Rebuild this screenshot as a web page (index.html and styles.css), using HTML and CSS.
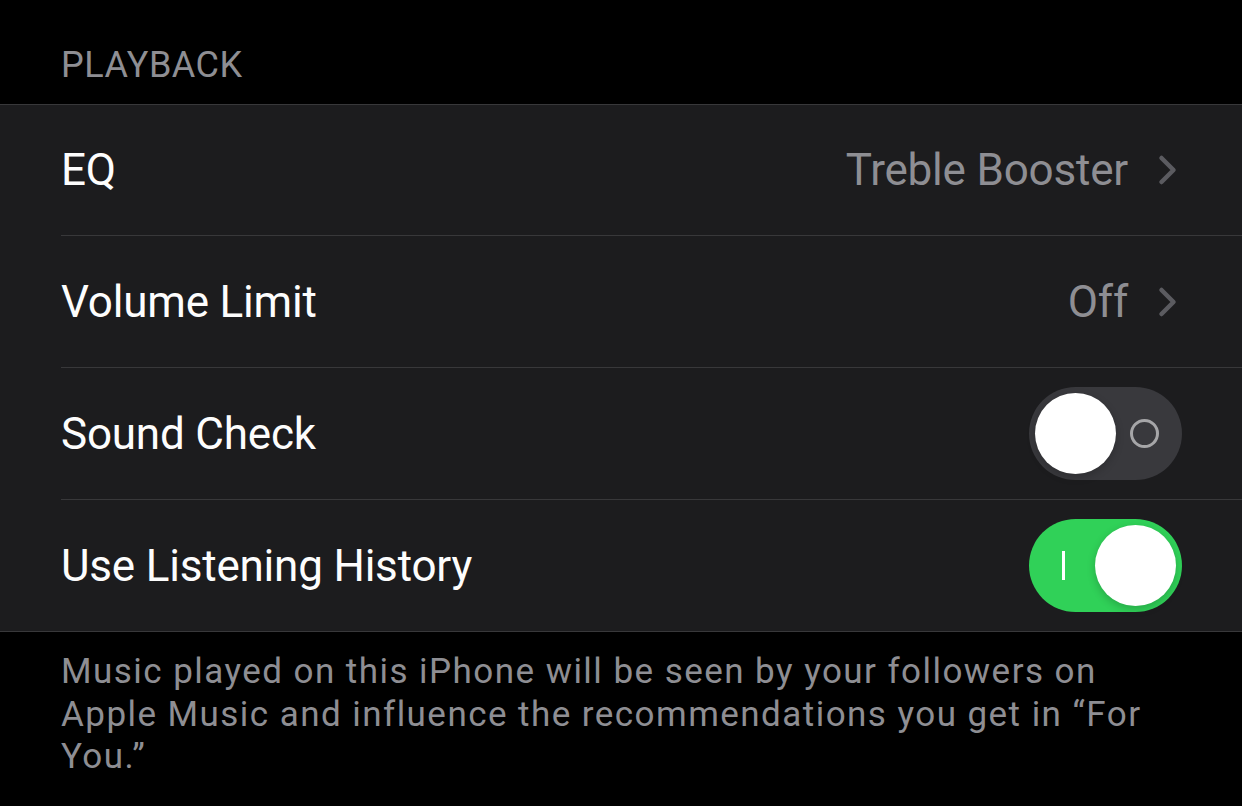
FILE: index.html
```html
<!DOCTYPE html>
<html lang="en">
<head>
<meta charset="UTF-8" />
<meta name="viewport" content="width=device-width, initial-scale=1" />
<title>Playback</title>
<link rel="stylesheet" href="styles.css">
</head>
<body>
  <div class="section-header">PLAYBACK</div>
  <div class="group">
    <div class="row">
      <span class="row-label">EQ</span>
      <span class="row-value">Treble Booster</span>
      <svg class="chevron" width="20" height="32" viewBox="0 0 20 32"><path d="M3.5 4 L15.5 16 L3.5 28" fill="none" stroke="#5b5b60" stroke-width="4.5" stroke-linecap="round" stroke-linejoin="round"/></svg>
    </div>
    <div class="row">
      <span class="row-label">Volume Limit</span>
      <span class="row-value">Off</span>
      <svg class="chevron" width="20" height="32" viewBox="0 0 20 32"><path d="M3.5 4 L15.5 16 L3.5 28" fill="none" stroke="#5b5b60" stroke-width="4.5" stroke-linecap="round" stroke-linejoin="round"/></svg>
    </div>
    <div class="row">
      <span class="row-label">Sound Check</span>
      <div class="toggle">
        <span class="knob"></span>
        <span class="off-mark"></span>
      </div>
    </div>
    <div class="row">
      <span class="row-label">Use Listening History</span>
      <div class="toggle on">
        <span class="on-mark"></span>
        <span class="knob"></span>
      </div>
    </div>
  </div>
  <p class="section-footer">Music played on this iPhone will be seen by your followers on Apple Music and influence the recommendations you get in “For You.”</p>
</body>
</html>
```

FILE: styles.css
```css
body {
  margin: 0;
  background: #000;
  font-family: Roboto, 'Noto Sans', sans-serif;
  color: #fff;
  width: 1242px;
  height: 806px;
  overflow: hidden;
}
.section-header {
  height: 104px;
  box-sizing: border-box;
  padding: 44px 0 0 61px;
  font-size: 36px;
  line-height: 42px;
  color: #8e8e93;
  letter-spacing: 0.5px;
}
.group {
  background: #1c1c1e;
  border-top: 1px solid #38383a;
  border-bottom: 1px solid #38383a;
}
.row {
  height: 131px;
  margin-left: 61px;
  padding-right: 60px;
  display: flex;
  align-items: center;
  border-bottom: 1px solid #38383a;
}
.row:first-child {
  height: 130px;
}
.row:last-child {
  border-bottom: none;
}
.row-label {
  flex: 1;
  font-size: 44px;
  letter-spacing: -0.2px;
  color: #fdfdfd;
}
.row-value {
  font-size: 44px;
  letter-spacing: -0.2px;
  color: #8e8e93;
  margin-right: 30px;
}
.chevron {
  margin-right: 4px;
}
.toggle {
  width: 153px;
  height: 93px;
  border-radius: 47px;
  background: #39393d;
  display: flex;
  align-items: center;
  padding: 0 6px;
  box-sizing: border-box;
}
.toggle .knob {
  width: 81px;
  height: 81px;
  border-radius: 50%;
  background: #fff;
  box-shadow: 0 3px 8px rgba(0,0,0,0.2);
}
.off-mark {
  width: 23px;
  height: 23px;
  border: 3px solid #a6a6a8;
  border-radius: 50%;
  margin-left: 14px;
}
.toggle.on {
  background: #30d158;
  justify-content: space-between;
}
.on-mark {
  width: 3px;
  height: 29px;
  background: #fff;
  margin-left: 27px;
}
.section-footer {
  margin: 0;
  padding: 19px 61px 0 61px;
  font-size: 35px;
  line-height: 42.5px;
  letter-spacing: 1.45px;
  color: #8e8e93;
}
```
